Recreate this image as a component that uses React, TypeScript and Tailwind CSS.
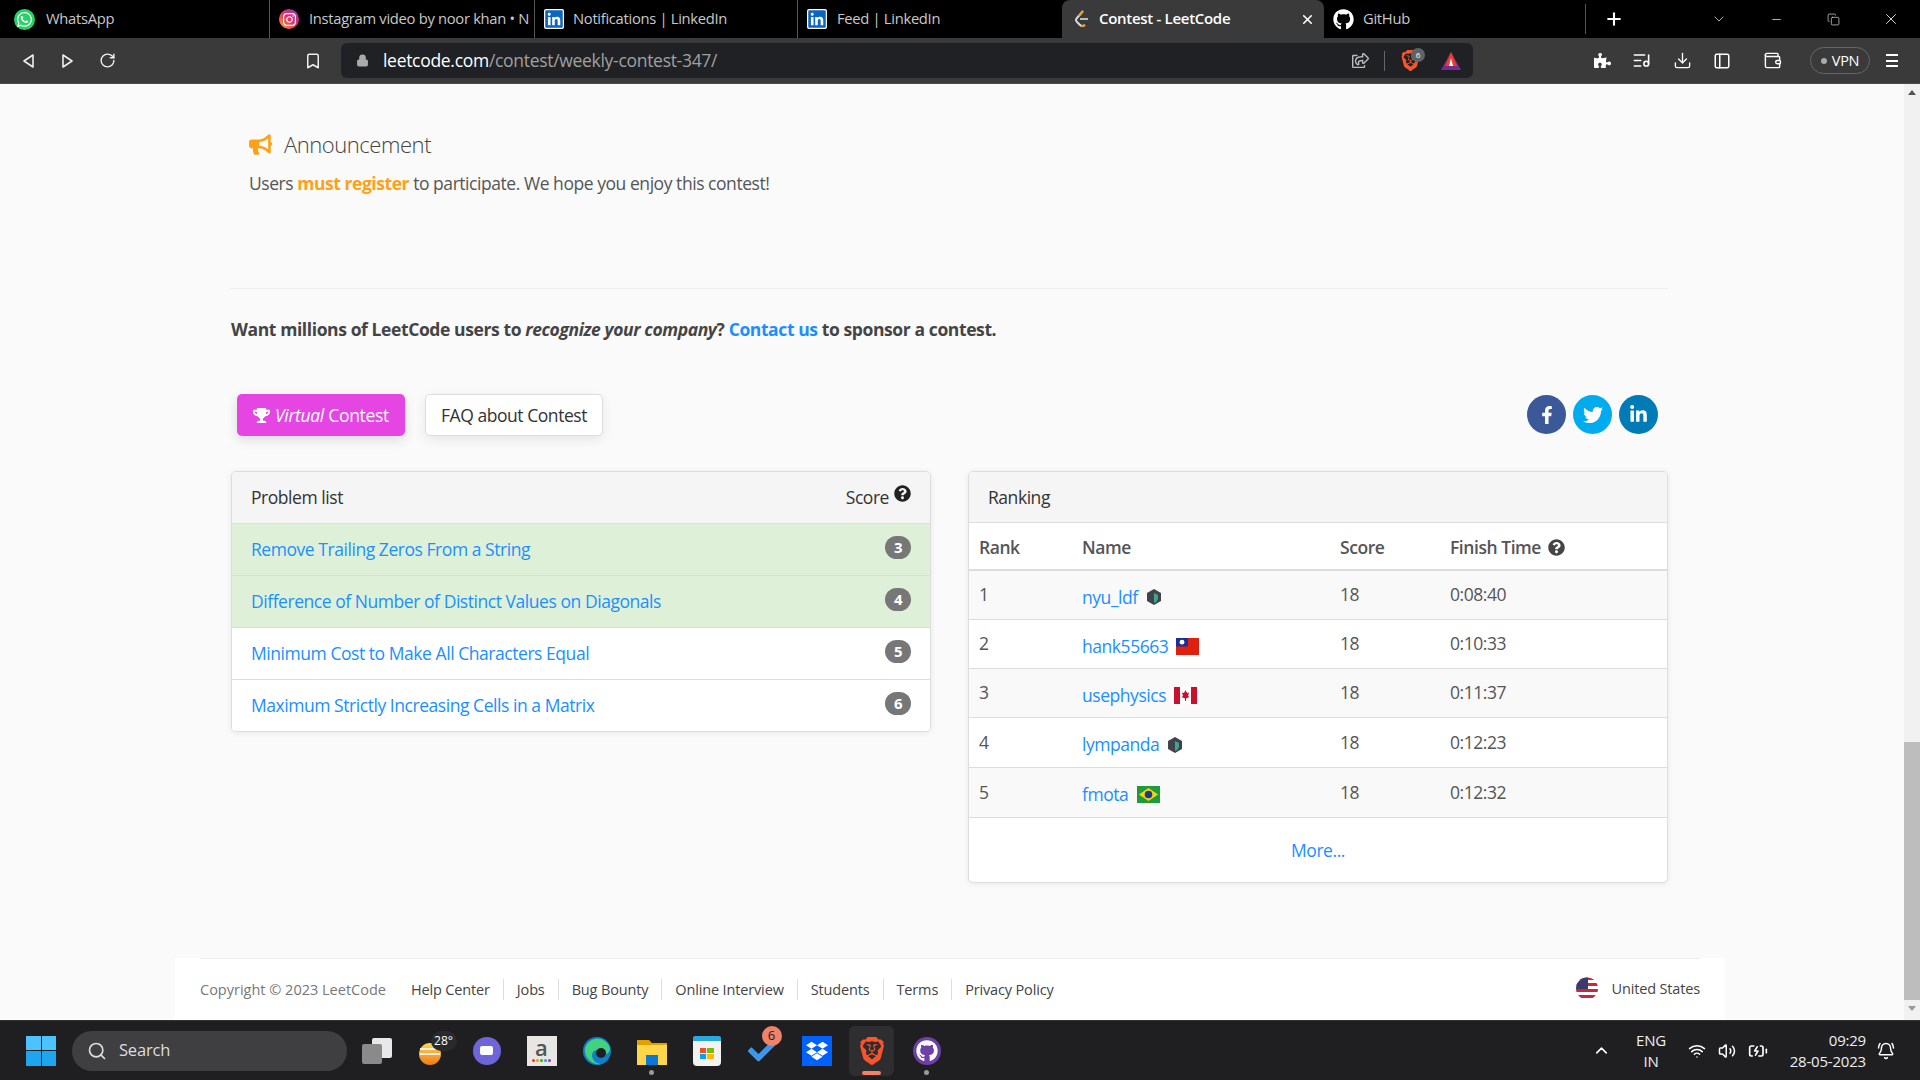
import React from "react";
import { FaWhatsapp, FaLinkedin, FaGithub, FaBullhorn, FaTrophy, FaQuestionCircle, FaFacebookF, FaTwitter, FaLinkedinIn, FaPuzzlePiece, FaDropbox, FaCheck, FaRegShareSquare } from "react-icons/fa";
import { SiBrave, SiInstagram } from "react-icons/si";
import { Bookmark, Lock, RotateCw, Download, PanelLeft, Wallet, Plus, ChevronDown, ChevronUp, Minus, Copy, X, Search, Wifi, Volume2, BatteryCharging, BellRing, ListMusic } from "lucide-react";

const F = "font-['Open_Sans','Noto_Sans',sans-serif]";

function LeetIcon() {
  return (
    <svg width="16" height="18" viewBox="0 0 16 18">
      <path d="M9 1 L3 8 Q1 10 3 12 L6 15 Q8 17 11 15" fill="none" stroke="#d9d9d9" strokeWidth="2" />
      <path d="M9 1 L5 6" fill="none" stroke="#f0a020" strokeWidth="2" />
      <path d="M7 15.5 Q9 16.5 11 15" fill="none" stroke="#f0a020" strokeWidth="2" />
      <rect x="6" y="8" width="8" height="2" fill="#bbb" />
    </svg>
  );
}

function Tab({ w, icon, text, active, sep, pad }: { w: string; icon: React.ReactNode; text: string; active?: boolean; sep?: boolean; pad: string }) {
  return (
    <div className={`${w} h-[38px] flex items-center shrink-0 relative ${active ? "bg-[#3a3a3a] rounded-t-lg text-white font-semibold text-[15px]" : "text-[#c8c8c8] text-[14.75px]"} ${sep ? "border-r border-[#555]" : ""}`}>
      <div className={`${pad} flex items-center shrink-0`}>{icon}</div>
      <span className="mt-[-2px] ml-[6px] whitespace-nowrap overflow-hidden flex-1 tracking-[-0.3px]">{text}</span>
      {active && <X size={15} className="mr-[9px] text-white" strokeWidth={2.5} />}
    </div>
  );
}

function TabBar() {
  return (
    <div className="h-[38px] bg-black flex items-center shrink-0">
      <Tab w="w-[270px]" pad="ml-[14px] w-[26px]" sep icon={<span className="w-[21px] h-[21px] rounded-full bg-[#25d366] flex items-center justify-center"><FaWhatsapp size={17} color="#fff" /></span>} text="WhatsApp" />
      <Tab w="w-[265px]" pad="ml-[9px] w-[24px]" sep icon={<span className="w-[20px] h-[20px] rounded-full bg-[linear-gradient(45deg,#fdb022,#e1306c_50%,#8a3ab9)] flex items-center justify-center"><SiInstagram size={13} color="#fff" /></span>} text="Instagram video by noor khan • N" />
      <Tab w="w-[263px]" pad="ml-[9px] w-[23px]" sep icon={<FaLinkedin size={20} color="#0a66c2" className="bg-white rounded-[2px]" />} text="Notifications | LinkedIn" />
      <Tab w="w-[264px]" pad="ml-[9px] w-[24px]" icon={<FaLinkedin size={20} color="#0a66c2" className="bg-white rounded-[2px]" />} text="Feed | LinkedIn" />
      <Tab w="w-[262px]" pad="ml-[12px] w-[19px]" active icon={<LeetIcon />} text="Contest - LeetCode" />
      <Tab w="w-[261px]" pad="ml-[9px] w-[24px]" icon={<FaGithub size={21} color="#fff" />} text="GitHub" />
      <div className="flex-1 h-[30px] border-l border-[#555] flex items-center relative text-[#ddd]">
        <Plus size={20} className="ml-[18px] text-white" strokeWidth={2.5} />
        <ChevronDown size={16} className="ml-[87px]" strokeWidth={1.2} />
        <Minus size={13} className="ml-[43px]" strokeWidth={1.5} />
        <Copy size={13} className="ml-[44px]" strokeWidth={1.3} />
        <X size={18} className="ml-[42px]" strokeWidth={1.3} />
      </div>
    </div>
  );
}

function Toolbar() {
  return (
    <div className="h-[46px] bg-[#3a3a3a] flex items-center shrink-0 border-b border-[#4a4a4a] relative">
      <svg width="14" height="16" viewBox="0 0 14 16" className="ml-[21px]"><path d="M12 2 L3 8 L12 14 Z" fill="none" stroke="#eee" strokeWidth="1.6" strokeLinejoin="round" /></svg>
      <svg width="14" height="16" viewBox="0 0 14 16" className="ml-[26px]"><path d="M2 2 L11 8 L2 14 Z" fill="none" stroke="#eee" strokeWidth="1.6" strokeLinejoin="round" /></svg>
      <RotateCw size={17} className="ml-[24px] text-[#eee]" strokeWidth={2} />
      <Bookmark size={18} className="ml-[188px] text-[#eee]" strokeWidth={2} />
      <div className="ml-[19px] w-[1132px] h-[35px] rounded-md bg-[#202124] flex items-center relative shrink-0">
        <Lock size={13} className="ml-[15px] text-[#aaa]" fill="#aaa" />
        <span className="ml-[14px] text-[17.5px] tracking-[-0.3px] text-white whitespace-nowrap">leetcode.com<span className="text-[#a0a0a0]">/contest/weekly-contest-347/</span></span>
        <div className="ml-auto flex items-center">
          <FaRegShareSquare size={17} className="text-[#bbb]" />
          <div className="w-px h-[20px] bg-[#666] ml-[15px]" />
          <div className="relative ml-[15px]">
            <SiBrave size={21} color="#fb542b" />
            <span className="absolute -top-[2px] left-[11px] w-[14px] h-[14px] rounded-full bg-[#5f6368] text-[8px] text-white flex items-center justify-center">6</span>
          </div>
          <svg width="22" height="22" viewBox="0 0 22 22" className="ml-[19px] mr-[11px]"><path d="M11 2 L21 20 L1 20 Z" fill="#7a2b8f" /><path d="M11 2 L17 16 L5 16 Z" fill="#ee3b2b" /><path d="M11 8 L13 16 L9 16 Z" fill="#fff" /></svg>
        </div>
      </div>
      <FaPuzzlePiece size={17} className="ml-[121px] text-white" />
      <ListMusic size={19} className="ml-[21px] text-white" strokeWidth={2} />
      <Download size={19} className="ml-[22px] text-white" strokeWidth={1.7} />
      <PanelLeft size={18} className="ml-[21px] text-white" strokeWidth={2} />
      <Wallet size={19} className="ml-[32px] text-white" strokeWidth={1.8} />
      <div className="ml-[28px] w-[60px] h-[27px] rounded-full border border-[#666] flex items-center justify-center gap-[5px] text-[14.5px] text-white tracking-[-0.3px]">
        <span className="w-[6px] h-[6px] rounded-full bg-[#aaa]" />VPN
      </div>
      <div className="ml-[16px] flex flex-col gap-[3.5px]">
        <span className="w-[12px] h-[2px] bg-white" /><span className="w-[12px] h-[2px] bg-white" /><span className="w-[12px] h-[2px] bg-white" />
      </div>
    </div>
  );
}

const problems = [
  { t: "Remove Trailing Zeros From a String", s: 3, done: true },
  { t: "Difference of Number of Distinct Values on Diagonals", s: 4, done: true },
  { t: "Minimum Cost to Make All Characters Equal", s: 5 },
  { t: "Maximum Strictly Increasing Cells in a Matrix", s: 6 },
];

function ProblemPanel() {
  return (
    <div className="w-[700px] self-start bg-white border border-[#ddd] rounded-[5px] shadow-[0_1px_6px_rgba(0,0,0,0.08)] overflow-hidden">
      <div className="h-[51px] bg-[#f5f5f5] flex items-center justify-between pl-[19px] pr-[19px] text-[#333]">
        <span>Problem list</span>
        <span className="flex items-start">Score<FaQuestionCircle size={17} className="ml-[5px] mt-[1px] text-[#222]" /></span>
      </div>
      {problems.map((p) => (
        <div key={p.s} className={`h-[52px] border-t border-[#ddd] flex items-center justify-between pl-[19px] pr-[19px] ${p.done ? "bg-[#dff0d8]" : "bg-white"}`}>
          <span className="text-[#1a90ff]">{p.t}</span>
          <span className="w-[26px] h-[23px] mt-[-4px] rounded-full bg-[#777] text-white text-[15px] font-bold flex items-center justify-center">{p.s}</span>
        </div>
      ))}
    </div>
  );
}

function Hex() {
  return (
    <svg width="16" height="18" viewBox="0 0 16 18">
      <path d="M8 1 L15 5 L15 13 L8 17 L1 13 L1 5 Z" fill="#3f444a" />
      <path d="M8 5 L12 7 L12 11 Q11 14 8 15 Z" fill="#3fa58d" />
    </svg>
  );
}

const flagTW = (
  <svg width="23" height="17" viewBox="0 0 23 17"><rect width="23" height="17" fill="#e0200f" /><rect width="12" height="8.5" fill="#1a2f9c" /><circle cx="6" cy="4.2" r="2.4" fill="#fff" /></svg>
);
const flagCA = (
  <svg width="23" height="17" viewBox="0 0 23 17"><rect width="23" height="17" fill="#fff" /><rect width="6" height="17" fill="#c8102e" /><rect x="17" width="6" height="17" fill="#c8102e" /><path d="M11.5 3 L13 6 L15 5.5 L14 9 L15.5 10 L12 11.5 L12 14 L11 14 L11 11.5 L7.5 10 L9 9 L8 5.5 L10 6 Z" fill="#c8102e" /></svg>
);
const flagBR = (
  <svg width="23" height="17" viewBox="0 0 23 17"><rect width="23" height="17" fill="#1e9c3c" /><path d="M11.5 2 L21 8.5 L11.5 15 L2 8.5 Z" fill="#f7d417" /><circle cx="11.5" cy="8.5" r="3.8" fill="#1d3a8a" /></svg>
);

const rows: { r: number; n: string; icon: React.ReactNode; gap: string; t: string; h: string }[] = [
  { r: 1, n: "nyu_ldf", icon: <Hex />, gap: "ml-[8px]", t: "0:08:40", h: "h-[49px]" },
  { r: 2, n: "hank55663", icon: flagTW, gap: "ml-[8px]", t: "0:10:33", h: "h-[49px]" },
  { r: 3, n: "usephysics", icon: flagCA, gap: "ml-[8px]", t: "0:11:37", h: "h-[49px]" },
  { r: 4, n: "lympanda", icon: <Hex />, gap: "ml-[8px]", t: "0:12:23", h: "h-[50px]" },
  { r: 5, n: "fmota", icon: flagBR, gap: "ml-[9px]", t: "0:12:32", h: "h-[50px]" },
];

function RankingPanel() {
  return (
    <div className="w-[700px] h-[412px] bg-white border border-[#ddd] rounded-[5px] shadow-[0_1px_6px_rgba(0,0,0,0.08)] overflow-hidden flex flex-col">
      <div className="h-[51px] bg-[#f5f5f5] border-b border-[#ddd] flex items-center pl-[19px] text-[#333] shrink-0">Ranking</div>
      <div className="h-[48px] pt-[2px] border-b-2 border-[#ddd] grid grid-cols-[103px_258px_110px_1fr] pl-[10px] items-center font-semibold shrink-0">
        <span>Rank</span><span>Name</span><span>Score</span>
        <span className="flex items-center">Finish Time<FaQuestionCircle size={17} className="ml-[7px] text-[#444]" /></span>
      </div>
      {rows.map((x, i) => (
        <div key={x.r} className={`${x.h} grid grid-cols-[103px_258px_110px_1fr] pl-[10px] items-center border-b border-[#ddd] shrink-0 ${i % 2 === 0 ? "bg-[#f9f9f9]" : "bg-white"}`}>
          <span className="mt-[-1px]">{x.r}</span>
          <span className="flex items-center mt-[4px]"><span className="text-[#1a90ff]">{x.n}</span><span className={`${x.gap} flex`}>{x.icon}</span></span>
          <span className="mt-[-1px]">18</span>
          <span className="mt-[-1px]">{x.t}</span>
        </div>
      ))}
      <div className="flex-1 flex items-center justify-center text-[#1a90ff]">More...</div>
    </div>
  );
}

function Footer() {
  const links = ["Help Center", "Jobs", "Bug Bounty", "Online Interview", "Students", "Terms", "Privacy Policy"];
  return (
    <div className="ml-[175px] w-[1550px] h-[62px] bg-white px-[25px] shrink-0 mt-auto">
      <div className="h-full border-t border-[#eee] flex items-center text-[14.5px] tracking-[-0.15px]">
        <span className="text-[#777] tracking-[0px]">Copyright © 2023 LeetCode</span>
        <div className="flex items-center ml-[25px]">
          {links.map((l, i) => (
            <span key={l} className={`text-[#444] ${i < links.length - 1 ? "pr-[13px] mr-[13px] border-r border-[#ddd]" : ""}`}>{l}</span>
          ))}
        </div>
        <div className="ml-auto flex items-center mt-[-2px] text-[#444]">
          <svg width="22" height="23" viewBox="0 0 22 23" className="mr-[13px]">
            <defs><clipPath id="usc"><circle cx="11" cy="11.5" r="11" /></clipPath></defs>
            <g clipPath="url(#usc)">
              <rect width="22" height="23" fill="#fff" />
              <rect y="0" width="22" height="3" fill="#c8283c" /><rect y="6" width="22" height="3" fill="#c8283c" /><rect y="12" width="22" height="3" fill="#c8283c" /><rect y="18" width="22" height="3" fill="#c8283c" />
              <rect width="12" height="12" fill="#3c3b6e" />
            </g>
          </svg>
          <span>United States</span>
        </div>
      </div>
    </div>
  );
}

function Page() {
  return (
    <div className="flex-1 flex bg-[#fafafa] min-h-0">
      <div className="flex-1 flex flex-col text-[17.5px] text-[#555] tracking-[-0.45px] min-w-0">
        <div className="ml-[231px] w-[1437px]">
          <div className="pl-[18px] pt-[46px] h-[205px] border-b border-[#eee]">
            <div className="flex items-center h-[28px]">
              <FaBullhorn size={23} color="#ffa116" />
              <span className="ml-[12px] text-[22px] font-light text-[#444]">Announcement</span>
            </div>
            <p className="mt-[12px] leading-[26px]">Users <b className="font-bold text-[#ffa116]">must register</b> to participate. We hope you enjoy this contest!</p>
          </div>
          <p className="mt-[27px] leading-[26px] font-bold text-[#444] tracking-[-0.4px]">Want millions of LeetCode users to <i>recognize your company</i>? <span className="text-[#1a90ff]">Contact us</span> to sponsor a contest.</p>
          <div className="mt-[52px] flex items-start">
            <div className="ml-[6px] w-[168px] h-[42px] rounded-[5px] bg-[#e546e3] text-white flex items-center justify-center shadow-[0_4px_12px_rgba(0,0,0,0.12)] tracking-[-0.3px]">
              <FaTrophy size={17} className="mr-[5px]" /><i>Virtual</i>&nbsp;Contest
            </div>
            <div className="ml-[20px] w-[178px] h-[42px] rounded-[5px] bg-white border border-[#ddd] text-[#333] flex items-center justify-center shadow-[0_4px_12px_rgba(0,0,0,0.08)]">FAQ about Contest</div>
            <div className="ml-auto mt-[1px] mr-[10px] flex gap-[7px]">
              <span className="w-[39px] h-[39px] rounded-full bg-[#3b5998] flex items-center justify-center"><FaFacebookF size={18} color="#fff" /></span>
              <span className="w-[39px] h-[39px] rounded-full bg-[#00aced] flex items-center justify-center"><FaTwitter size={20} color="#fff" /></span>
              <span className="w-[39px] h-[39px] rounded-full bg-[#007bb6] flex items-center justify-center"><FaLinkedinIn size={19} color="#fff" /></span>
            </div>
          </div>
          <div className="mt-[35px] flex justify-between">
            <ProblemPanel />
            <RankingPanel />
          </div>
        </div>
        <Footer />
      </div>
      <div className="w-4 bg-[#f1f1f1] flex flex-col items-center shrink-0 relative">
        <span className="mt-[6px] w-0 h-0 border-x-[4px] border-x-transparent border-b-[5px] border-b-[#555]" />
        <div className="mt-[647px] w-[16px] h-[258px] bg-[#bdbdbd]" />
        <span className="mt-[6px] w-0 h-0 border-x-[4px] border-x-transparent border-t-[5px] border-t-[#999]" />
      </div>
    </div>
  );
}

function TaskIcon({ children, dot, active }: { children: React.ReactNode; dot?: boolean; active?: boolean }) {
  return (
    <div className={`w-[45px] h-[50px] mx-[5px] rounded-md flex items-center justify-center relative shrink-0 ${active ? "bg-[#2e2e30]" : ""}`}>
      {children}
      {dot && <span className="absolute bottom-[1px] left-[20px] w-[5px] h-[5px] rounded-full bg-[#9a9a9a]" />}
      {active && <span className="absolute bottom-[1px] left-[13px] w-[19px] h-[4px] rounded-full bg-[#f0816a]" />}
    </div>
  );
}

function Taskbar() {
  return (
    <div className="h-[60px] bg-[#1f1f22] border-t border-[#333] flex items-center shrink-0 text-white">
      <div className="ml-[26px] grid grid-cols-2 gap-[1px] w-[30px] h-[30px] shrink-0">
        <span className="bg-[#4cc2ff]" /><span className="bg-[#4cc2ff]" /><span className="bg-[#1fa5ee]" /><span className="bg-[#1fa5ee]" />
      </div>
      <div className="ml-[16px] w-[275px] h-[40px] rounded-full bg-[#3f3f41] flex items-center text-[#ddd] text-[16.5px] tracking-[-0.2px] shrink-0">
        <Search size={20} className="ml-[15px] mr-[12px]" />Search
      </div>
      <div className="ml-[2px] flex items-center">
        <TaskIcon><span className="relative w-[30px] h-[26px]"><span className="absolute right-0 top-0 w-[20px] h-[20px] bg-[#e8e8e8] rounded-[2px]" /><span className="absolute left-0 bottom-0 w-[20px] h-[20px] bg-[#8a8a8a] rounded-[2px]" /></span></TaskIcon>
        <TaskIcon><span className="relative w-[26px] h-[28px]"><span className="absolute left-0 bottom-0 w-[22px] h-[22px] rounded-full bg-[linear-gradient(#ffd84a,#f07a1a)]" /><span className="absolute left-[1px] top-[11px] w-[20px] h-[2px] bg-[#eee]" /><span className="absolute left-[1px] top-[16px] w-[20px] h-[2px] bg-[#eee]" /><span className="absolute left-[12px] -top-[6px] w-[26px] h-[20px] rounded-full bg-[#2a2a2c] text-[12px] text-white flex items-center justify-center">28°</span></span></TaskIcon>
        <TaskIcon><span className="w-[28px] h-[28px] rounded-full bg-[#6d65d8] flex items-center justify-center"><span className="w-[13px] h-[9px] rounded-[2px] bg-white" /></span></TaskIcon>
        <TaskIcon><span className="w-[30px] h-[30px] bg-[#e8e6e3] text-[#555] text-[22px] font-semibold leading-[22px] flex flex-col items-center"><span>a</span><span className="flex gap-[1px] mt-[1px]"><i className="w-[3px] h-[3px] rounded-full bg-[#e33]" /><i className="w-[3px] h-[3px] rounded-full bg-[#e90]" /><i className="w-[3px] h-[3px] rounded-full bg-[#3a3]" /><i className="w-[3px] h-[3px] rounded-full bg-[#39d]" /><i className="w-[3px] h-[3px] rounded-full bg-[#93d]" /></span></span></TaskIcon>
        <TaskIcon><svg width="30" height="30" viewBox="0 0 30 30"><circle cx="15" cy="15" r="14" fill="#0f7fc9" /><path d="M3 12 A13 13 0 0 1 28 12 Q28 19 20 19 Q14 19 17 14 Q10 13 10 20 Q11 27 19 28 A14 14 0 0 1 3 12Z" fill="#43d17f" /><circle cx="19" cy="17" r="5" fill="#1f1f22" /></svg></TaskIcon>
        <TaskIcon dot><svg width="30" height="28" viewBox="0 0 30 28"><path d="M0 3 H12 L15 6 H30 V28 H0 Z" fill="#e0a000" /><rect y="8" width="30" height="20" fill="#ffd54a" /><rect x="9" y="18" width="12" height="10" fill="#0a78d4" /></svg></TaskIcon>
        <TaskIcon><span className="relative w-[28px] h-[30px] rounded-b-[4px] rounded-t-[2px] bg-[#f3f3f3] border-t-[5px] border-t-[#2aa7e0] grid grid-cols-2 gap-[1px] p-[7px]"><i className="bg-[#f25022]" /><i className="bg-[#7fba00]" /><i className="bg-[#00a4ef]" /><i className="bg-[#ffb900]" /></span></TaskIcon>
        <TaskIcon><span className="relative"><FaCheck size={28} color="#3d96e8" /><span className="absolute -top-[11px] left-[14px] w-[20px] h-[20px] rounded-full bg-[#f0816a] text-[#222] text-[13px] flex items-center justify-center">6</span></span></TaskIcon>
        <TaskIcon><span className="w-[30px] h-[30px] bg-[#0061fe] flex items-center justify-center"><FaDropbox size={22} color="#fff" /></span></TaskIcon>
        <TaskIcon active><SiBrave size={28} color="#fb542b" /></TaskIcon>
        <TaskIcon dot><span className="w-[28px] h-[28px] rounded-full bg-[#6f3fa8] flex items-center justify-center"><FaGithub size={22} color="#fff" /></span></TaskIcon>
      </div>
      <div className="ml-auto flex items-center">
        <ChevronUp size={19} strokeWidth={2} />
        <div className="ml-[20px] w-[40px] text-[15px] leading-[21px] text-center text-[#eee] tracking-[-0.2px]">ENG<br />IN</div>
        <Wifi size={18} className="ml-[17px]" />
        <Volume2 size={18} className="ml-[12px]" />
        <BatteryCharging size={20} className="ml-[12px]" />
        <div className="ml-[8px] w-[90px] text-[15px] leading-[21px] text-right text-[#eee] tracking-[-0.2px]">09:29<br />28-05-2023</div>
        <BellRing size={18} className="ml-[11px] mr-[25px]" />
      </div>
    </div>
  );
}

export default function App() {
  return (
    <div className={`w-[1920px] h-[1080px] flex flex-col overflow-hidden ${F}`}>
      <TabBar />
      <Toolbar />
      <Page />
      <Taskbar />
    </div>
  );
}
